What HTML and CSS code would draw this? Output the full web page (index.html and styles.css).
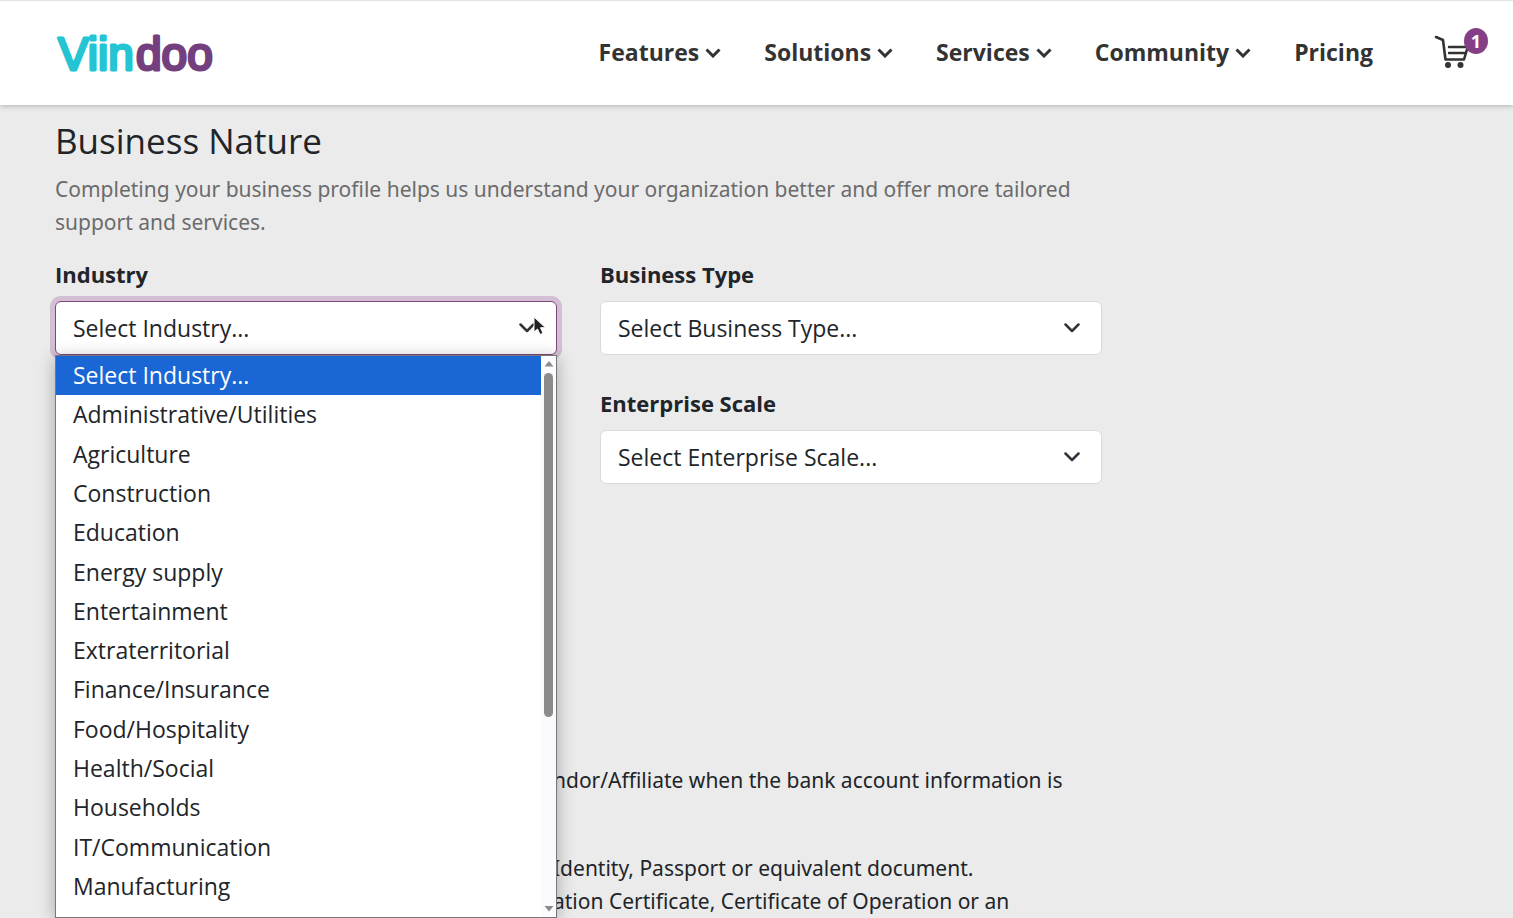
FILE: index.html
```html
<!DOCTYPE html>
<html lang="en">
<head>
<meta charset="utf-8">
<meta name="viewport" content="width=device-width, initial-scale=1">
<title>Business Nature | Viindoo</title>
<link rel="stylesheet" href="styles.css">
</head>
<body>
<svg class="defs" width="0" height="0" aria-hidden="true">
  <symbol id="chevron" viewBox="0 0 16 10"><path d="M1.5 1.5 8 8l6.500-6.500" fill="none" stroke="currentColor" stroke-linecap="round" stroke-linejoin="round"/></symbol>
  <symbol id="nav-chevron" viewBox="0 0 16 10"><path d="M1.500 1.500 8 8l6.500-6.500" fill="none" stroke="currentColor"/></symbol>
</svg>
<header class="header">
  <a class="logo" href="#" aria-label="Viindoo">
    <svg width="170" height="60" viewBox="0 0 170 60">
      <text class="logo-text logo-cyan" x="3" y="48">Viin</text>
      <text class="logo-text logo-purple" x="81" y="48">doo</text>
    </svg>
  </a>
  <nav class="nav">
    <a class="nav-link" href="#">Features<svg class="nav-icon"><use href="#nav-chevron"/></svg></a>
    <a class="nav-link" href="#">Solutions<svg class="nav-icon"><use href="#nav-chevron"/></svg></a>
    <a class="nav-link" href="#">Services<svg class="nav-icon"><use href="#nav-chevron"/></svg></a>
    <a class="nav-link" href="#">Community<svg class="nav-icon"><use href="#nav-chevron"/></svg></a>
    <a class="nav-link" href="#">Pricing</a>
  </nav>
  <a class="cart" href="#" aria-label="Cart, 1 item">
    <svg width="36" height="34" viewBox="0 0 36 34" fill="none" stroke="#333" stroke-linecap="round" stroke-linejoin="round">
      <path d="M2 2 9 5l2.500 19.500h18.500l4-13.500" stroke-width="2.600"/>
      <path d="M15 12h18M15 18h17" stroke-width="2.400"/>
      <circle cx="14" cy="30" r="3" fill="#333" stroke="none"/>
      <circle cx="26.500" cy="30" r="3" fill="#333" stroke="none"/>
    </svg>
    <span class="badge">1</span>
  </a>
</header>
<main class="main">
  <h1 class="title">Business Nature</h1>
  <p class="intro">Completing your business profile helps us understand your organization better and offer more tailored support and services.</p>
  <form class="form">
    <div class="field field-industry">
      <label class="label" for="industry">Industry</label>
      <div class="control">
        <select class="select select-open" id="industry"><option>Select Industry...</option></select>
        <svg class="caret"><use href="#chevron"/></svg>
        <svg class="pointer" width="14" height="20" viewBox="0 0 14 20"><path d="M1 1v15l3.500-3 2.500 5.500 3-1.300-2.500-5.500H12.500z" fill="#222" stroke="#fff"/></svg>
        <div class="dropdown">
          <ul class="options" role="listbox" aria-label="Industry">
            <li class="option option-active" role="option" aria-selected="true">Select Industry...</li>
            <li class="option" role="option">Administrative/Utilities</li>
            <li class="option" role="option">Agriculture</li>
            <li class="option" role="option">Construction</li>
            <li class="option" role="option">Education</li>
            <li class="option" role="option">Energy supply</li>
            <li class="option" role="option">Entertainment</li>
            <li class="option" role="option">Extraterritorial</li>
            <li class="option" role="option">Finance/Insurance</li>
            <li class="option" role="option">Food/Hospitality</li>
            <li class="option" role="option">Health/Social</li>
            <li class="option" role="option">Households</li>
            <li class="option" role="option">IT/Communication</li>
            <li class="option" role="option">Manufacturing</li>
          </ul>
          <div class="scrollbar">
            <svg width="10" height="6" viewBox="0 0 10 6"><path d="M5 0l4.500 5.500h-9z" fill="#8b8b8b"/></svg>
            <div class="track"><div class="thumb"></div></div>
            <svg width="10" height="6" viewBox="0 0 10 6"><path d="M5 5.500 9.500 0h-9z" fill="#8b8b8b"/></svg>
          </div>
        </div>
      </div>
    </div>
    <div class="field">
      <label class="label" for="type">Business Type</label>
      <div class="control">
        <select class="select" id="type"><option>Select Business Type...</option></select>
        <svg class="caret"><use href="#chevron"/></svg>
      </div>
    </div>
    <div class="field field-scale">
      <label class="label" for="scale">Enterprise Scale</label>
      <div class="control">
        <select class="select" id="scale"><option>Select Enterprise Scale...</option></select>
        <svg class="caret"><use href="#chevron"/></svg>
      </div>
    </div>
  </form>
  <section class="notes">
    <p class="note">ndor/Affiliate when the bank account information is</p>
    <p class="note">Identity, Passport or equivalent document.<br>ation Certificate, Certificate of Operation or an</p>
  </section>
</main>
</body>
</html>
```
FILE: styles.css
```css
* { box-sizing: border-box; }
body {
  margin: 0;
  background: #ebebeb;
  color: #212529;
  font-family: "Open Sans", sans-serif;
  font-size: 22px;
  line-height: 33px;
}
p, h1, ul { margin: 0; padding: 0; }
.defs { position: absolute; }
.header {
  display: flex;
  align-items: center;
  height: 105px;
  padding: 0 25px 2px 55px;
  background: #fff;
  border-top: 1px solid #e4e4e4;
  box-shadow: 0 1px 5px rgba(0, 0, 0, 0.25);
}
.logo { display: flex; }
.logo-text {
  font-family: "Liberation Sans", sans-serif;
  font-size: 46px;
  font-weight: 400;
  stroke-width: 3px;
  stroke-linejoin: round;
}
.logo-cyan { fill: #25c4d3; stroke: #25c4d3; }
.logo-purple { fill: #733f7f; stroke: #733f7f; }
.nav { display: flex; gap: 43px; margin-left: auto; }
.nav-link {
  display: flex;
  align-items: center;
  gap: 6px;
  color: #333;
  font-size: 23px;
  font-weight: 700;
  text-decoration: none;
}
.nav-icon { width: 16px; height: 10px; margin-top: 2px; stroke-width: 3px; }
.cart { position: relative; display: flex; width: 54px; margin-left: 61px; }
.badge {
  position: absolute;
  top: -7px;
  right: 0;
  width: 24px;
  height: 26px;
  border-radius: 50%;
  background: #843f86;
  color: #fff;
  font-size: 18px;
  font-weight: 700;
  line-height: 26px;
  text-align: center;
}
.main { max-width: 1157px; padding: 14px 55px 0; }
.title { font-size: 35px; font-weight: 400; line-height: 43px; }
.intro, .note { font-family: "Noto Sans", sans-serif; font-size: 21px; }
.intro { margin-top: 11px; color: #6b6b6b; }
.form {
  display: grid;
  grid-template-columns: 1fr 1fr;
  gap: 32px 43px;
  margin-top: 19px;
}
.field-scale { grid-column: 2; }
.label { display: block; margin-bottom: 10px; font-weight: 700; }
.control { position: relative; }
.select {
  display: block;
  width: 100%;
  height: 54px;
  padding: 0 17px;
  appearance: none;
  border: 1px solid #d8d9df;
  border-radius: 6px;
  background: #fff;
  color: #212529;
  font: inherit;
  font-size: 23px;
}
.select-open { border-color: #80477f; box-shadow: 0 0 0 5px #d3bfd3; }
.caret {
  position: absolute;
  top: 22px;
  right: 22px;
  width: 16px;
  height: 10px;
  color: #30343d;
  stroke-width: 2.5px;
  pointer-events: none;
}
.pointer { position: absolute; top: 15px; right: 10px; }
.dropdown {
  position: absolute;
  z-index: 1;
  top: 54px;
  left: 0;
  right: 0;
  display: flex;
  height: 563px;
  border: 1px solid #77777c;
  background: #fff;
  box-shadow: 0 3px 16px rgba(0, 0, 0, 0.3);
}
.options {
  display: flex;
  flex: 1;
  flex-direction: column;
  padding-bottom: 11px;
  list-style: none;
}
.option {
  display: flex;
  flex: 1;
  align-items: center;
  padding-left: 17px;
  font-size: 23px;
}
.option-active { background: #1a66d4; color: #fff; }
.scrollbar {
  display: flex;
  flex-direction: column;
  align-items: center;
  width: 15px;
  padding: 5px 0;
  background: #fbfbfd;
}
.track { flex: 1; padding-top: 6px; }
.thumb { width: 9px; height: 344px; border-radius: 5px; background: #8b8b8b; }
.notes { display: grid; gap: 55px; margin: 280px 0 0 498px; }
```
